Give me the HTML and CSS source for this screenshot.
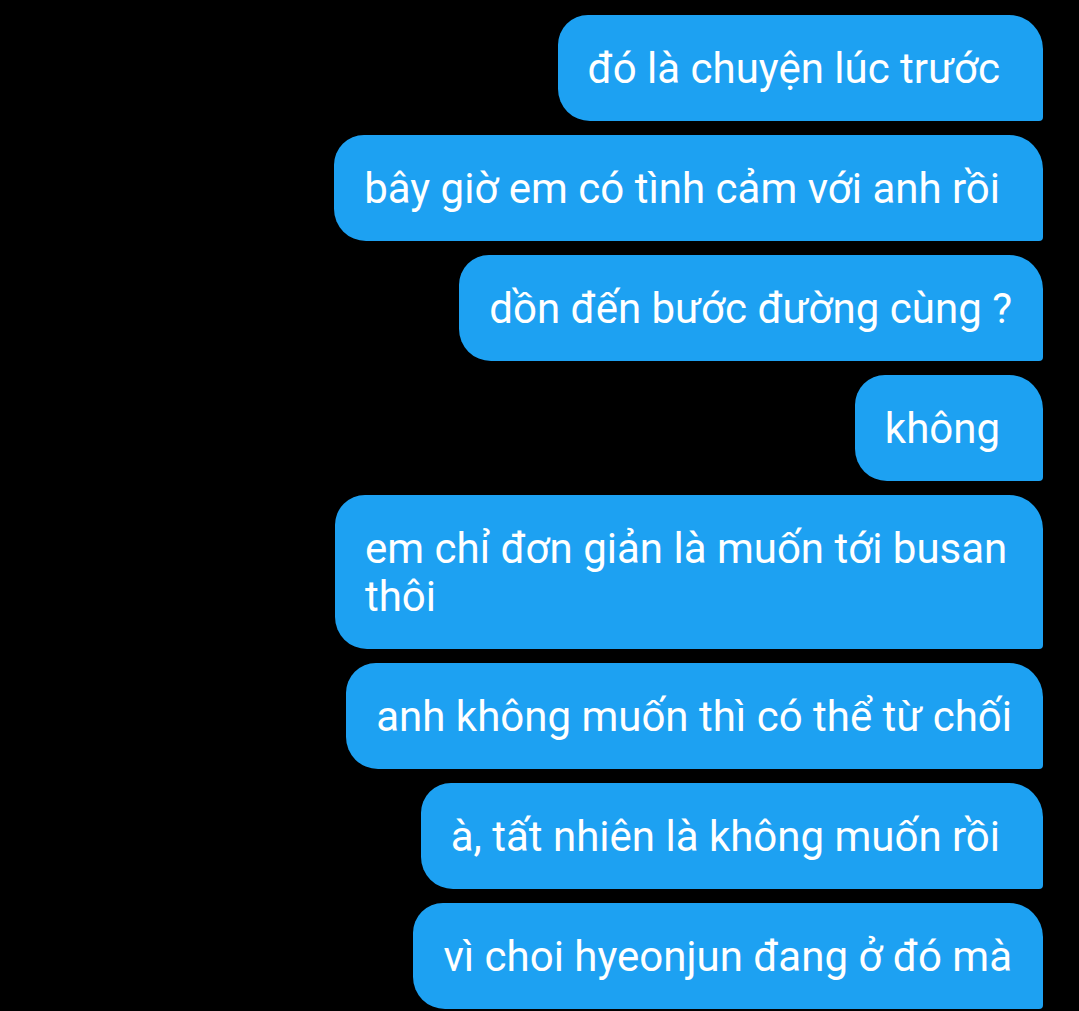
FILE: index.html
```html
<!DOCTYPE html>
<html lang="vi">
<head>
  <meta charset="UTF-8">
  <meta name="viewport" content="width=device-width, initial-scale=1.0">
  <title>Tin nhắn</title>
  <link rel="stylesheet" href="styles.css">
</head>
<body>
  <div class="chat">
    <div class="bubble">đó là chuyện lúc trước</div>
    <div class="bubble">bây giờ em có tình cảm với anh rồi</div>
    <div class="bubble tight">dồn đến bước đường cùng ?</div>
    <div class="bubble">không</div>
    <div class="bubble wide">em chỉ đơn giản là muốn tới busan thôi</div>
    <div class="bubble tight">anh không muốn thì có thể từ chối</div>
    <div class="bubble">à, tất nhiên là không muốn rồi</div>
    <div class="bubble tight">vì choi hyeonjun đang ở đó mà</div>
  </div>
</body>
</html>
```

FILE: styles.css
```css
body {
  margin: 0;
  background: #000;
  font-family: 'Roboto', 'Noto Sans', sans-serif;
}

.chat {
  display: flex;
  flex-direction: column;
  align-items: flex-end;
  gap: 14px;
  padding: 15px 36px 0 0;
}

.bubble {
  background: #1da1f2;
  color: #fff;
  font-size: 42px;
  line-height: 48px;
  padding: 30px 43px 28px 30px;
  border-radius: 30px 34px 4px 32px;
  max-width: 650px;
}

.bubble.wide {
  padding-right: 28px;
}

.bubble.tight {
  padding-right: 31px;
}
```
